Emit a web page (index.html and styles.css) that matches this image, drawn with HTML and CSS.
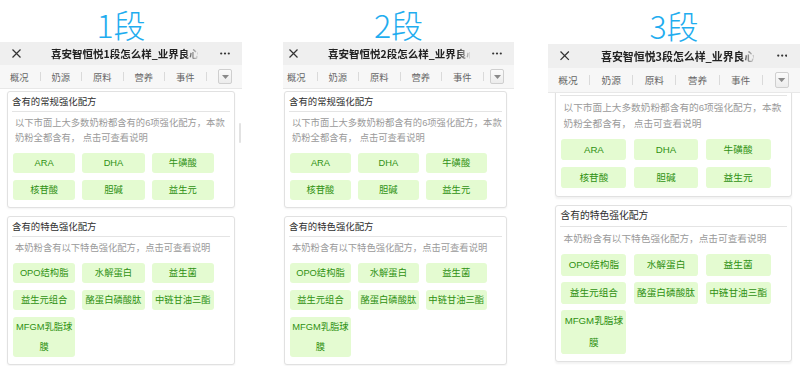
FILE: index.html
```html
<!DOCTYPE html>
<html lang="zh-CN">
<head>
<meta charset="utf-8">
<title>喜安智恒悦 1段 2段 3段</title>
<link rel="stylesheet" href="styles.css">
</head>
<body>
<div class="shots">

  <section class="shot shot--1">
    <h2 class="stage">1段</h2>
    <div class="phone">
      <div class="screen">
        <div class="titlebar">
          <svg class="close" width="9" height="9" viewBox="0 0 9 9"><path d="M0.5 0.5L8.5 8.5M8.5 0.5L0.5 8.5" stroke="#333" stroke-width="1.2" fill="none"/></svg>
          <div class="title"><span>喜安智恒悦1段怎么样_业界良心</span></div>
          <svg class="more" width="10" height="3" viewBox="0 0 10 3"><circle cx="1.2" cy="1.5" r="1.1" fill="#333"/><circle cx="5" cy="1.5" r="1.1" fill="#333"/><circle cx="8.8" cy="1.5" r="1.1" fill="#333"/></svg>
        </div>
        <div class="tabbar">
          <span class="tab">概况</span><i class="sep"></i>
          <span class="tab">奶源</span><i class="sep"></i>
          <span class="tab">原料</span><i class="sep"></i>
          <span class="tab">营养</span><i class="sep"></i>
          <span class="tab">事件</span><i class="sep"></i>
          <span class="drop"><svg width="7" height="4" viewBox="0 0 7 4"><path d="M0 0H7L3.5 4Z" fill="#8a8a8a"/></svg></span>
        </div>
        <div class="viewport">
          <div class="scroll">
            <div class="card">
              <div class="card-title">含有的常规强化配方</div>
              <div class="card-rule"></div>
              <p class="card-desc">以下市面上大多数奶粉都含有的6项强化配方，本款奶粉全都含有， 点击可查看说明</p>
              <div class="tags">
                <span class="tag">ARA</span><span class="tag">DHA</span><span class="tag">牛磺酸</span>
                <span class="tag">核苷酸</span><span class="tag">胆碱</span><span class="tag">益生元</span>
              </div>
            </div>
            <div class="card">
              <div class="card-title">含有的特色强化配方</div>
              <div class="card-rule"></div>
              <p class="card-desc">本奶粉含有以下特色强化配方，点击可查看说明</p>
              <div class="tags">
                <span class="tag">OPO结构脂</span><span class="tag">水解蛋白</span><span class="tag">益生菌</span>
                <span class="tag">益生元组合</span><span class="tag">酪蛋白磷酸肽</span><span class="tag">中链甘油三酯</span>
                <span class="tag">MFGM乳脂球膜</span>
              </div>
            </div>
          </div>
        </div>
      </div>
      <span class="scrollbar"></span>
    </div>
  </section>

  <section class="shot shot--2">
    <h2 class="stage">2段</h2>
    <div class="phone">
      <div class="screen">
        <div class="titlebar">
          <svg class="close" width="9" height="9" viewBox="0 0 9 9"><path d="M0.5 0.5L8.5 8.5M8.5 0.5L0.5 8.5" stroke="#333" stroke-width="1.2" fill="none"/></svg>
          <div class="title"><span>喜安智恒悦2段怎么样_业界良心</span></div>
          <svg class="more" width="10" height="3" viewBox="0 0 10 3"><circle cx="1.2" cy="1.5" r="1.1" fill="#333"/><circle cx="5" cy="1.5" r="1.1" fill="#333"/><circle cx="8.8" cy="1.5" r="1.1" fill="#333"/></svg>
        </div>
        <div class="tabbar">
          <span class="tab">概况</span><i class="sep"></i>
          <span class="tab">奶源</span><i class="sep"></i>
          <span class="tab">原料</span><i class="sep"></i>
          <span class="tab">营养</span><i class="sep"></i>
          <span class="tab">事件</span><i class="sep"></i>
          <span class="drop"><svg width="7" height="4" viewBox="0 0 7 4"><path d="M0 0H7L3.5 4Z" fill="#8a8a8a"/></svg></span>
        </div>
        <div class="viewport">
          <div class="scroll">
            <div class="card">
              <div class="card-title">含有的常规强化配方</div>
              <div class="card-rule"></div>
              <p class="card-desc">以下市面上大多数奶粉都含有的6项强化配方，本款奶粉全都含有， 点击可查看说明</p>
              <div class="tags">
                <span class="tag">ARA</span><span class="tag">DHA</span><span class="tag">牛磺酸</span>
                <span class="tag">核苷酸</span><span class="tag">胆碱</span><span class="tag">益生元</span>
              </div>
            </div>
            <div class="card">
              <div class="card-title">含有的特色强化配方</div>
              <div class="card-rule"></div>
              <p class="card-desc">本奶粉含有以下特色强化配方，点击可查看说明</p>
              <div class="tags">
                <span class="tag">OPO结构脂</span><span class="tag">水解蛋白</span><span class="tag">益生菌</span>
                <span class="tag">益生元组合</span><span class="tag">酪蛋白磷酸肽</span><span class="tag">中链甘油三酯</span>
                <span class="tag">MFGM乳脂球膜</span>
              </div>
            </div>
          </div>
        </div>
      </div>
    </div>
  </section>

  <section class="shot shot--3">
    <h2 class="stage">3段</h2>
    <div class="phone">
      <div class="screen">
        <div class="titlebar">
          <svg class="close" width="9" height="9" viewBox="0 0 9 9"><path d="M0.5 0.5L8.5 8.5M8.5 0.5L0.5 8.5" stroke="#333" stroke-width="1.2" fill="none"/></svg>
          <div class="title"><span>喜安智恒悦3段怎么样_业界良心</span></div>
          <svg class="more" width="10" height="3" viewBox="0 0 10 3"><circle cx="1.2" cy="1.5" r="1.1" fill="#333"/><circle cx="5" cy="1.5" r="1.1" fill="#333"/><circle cx="8.8" cy="1.5" r="1.1" fill="#333"/></svg>
        </div>
        <div class="tabbar">
          <span class="tab">概况</span><i class="sep"></i>
          <span class="tab">奶源</span><i class="sep"></i>
          <span class="tab">原料</span><i class="sep"></i>
          <span class="tab">营养</span><i class="sep"></i>
          <span class="tab">事件</span><i class="sep"></i>
          <span class="drop"><svg width="7" height="4" viewBox="0 0 7 4"><path d="M0 0H7L3.5 4Z" fill="#8a8a8a"/></svg></span>
        </div>
        <div class="viewport">
          <div class="scroll">
            <div class="card">
              <div class="card-title">含有的常规强化配方</div>
              <div class="card-rule"></div>
              <p class="card-desc">以下市面上大多数奶粉都含有的6项强化配方，本款奶粉全都含有， 点击可查看说明</p>
              <div class="tags">
                <span class="tag">ARA</span><span class="tag">DHA</span><span class="tag">牛磺酸</span>
                <span class="tag">核苷酸</span><span class="tag">胆碱</span><span class="tag">益生元</span>
              </div>
            </div>
            <div class="card">
              <div class="card-title">含有的特色强化配方</div>
              <div class="card-rule"></div>
              <p class="card-desc">本奶粉含有以下特色强化配方，点击可查看说明</p>
              <div class="tags">
                <span class="tag">OPO结构脂</span><span class="tag">水解蛋白</span><span class="tag">益生菌</span>
                <span class="tag">益生元组合</span><span class="tag">酪蛋白磷酸肽</span><span class="tag">中链甘油三酯</span>
                <span class="tag">MFGM乳脂球膜</span>
              </div>
            </div>
          </div>
        </div>
      </div>
    </div>
  </section>

</div>
</body>
</html>
```

FILE: styles.css
```css
* { box-sizing: border-box; margin: 0; padding: 0; }

html, body {
  width: 800px;
  height: 366px;
  overflow: hidden;
  background: #fff;
}

body {
  font-family: "Liberation Sans", "Noto Sans CJK SC", sans-serif;
  color: #333;
}

.shots {
  display: flex;
  align-items: flex-start;
}

.shot {
  flex: none;
  display: flex;
  flex-direction: column;
}
.shot--1 { width: 242px; }
.shot--2 { width: 231px; margin-left: 41px; }
.shot--3 { width: 252px; margin-left: 34px; }

.stage {
  height: 42px;
  padding-top: 6px;
  line-height: 36px;
  font-family: "Noto Sans CJK SC", sans-serif;
  font-size: 32px;
  font-weight: 300;
  color: #1fadef;
  text-align: center;
}
.shot--3 .stage { height: 44px; padding-top: 7px; }

.phone {
  position: relative;
  overflow: hidden;
  width: 242px;
  height: 330px;
}
.shot--2 .phone { width: 231px; }
.shot--2 .screen { margin-left: -6px; }
.shot--3 .phone { zoom: 1.04; }

.screen {
  width: 242px;
}
.shot--2 .screen { width: 237px; }

/* top title bar */
.titlebar {
  height: 23px;
  background: #efefef;
  display: flex;
  align-items: center;
  padding: 0 12px;
}
.close { flex: none; display: block; }
.title {
  margin-left: 30px;
  width: 147px;
  overflow: hidden;
  white-space: nowrap;
  font-family: "Noto Sans CJK SC", sans-serif;
  font-size: 10.5px;
  font-weight: 700;
  color: #222;
  -webkit-mask-image: linear-gradient(to right, #000 91%, rgba(0,0,0,0.15));
  mask-image: linear-gradient(to right, #000 91%, rgba(0,0,0,0.15));
}
.shot--2 .title { width: 142px; margin-left: 30px; }
.more { flex: none; display: block; margin-left: auto; }

/* tab bar */
.tabbar {
  height: 24px;
  background: #f7f7f7;
  border-bottom: 1px solid #e8e8e8;
  display: flex;
  align-items: center;
  padding-right: 10px;
}
.tab {
  width: 40.5px;
  flex: none;
  text-align: center;
  font-family: "Noto Sans CJK SC", sans-serif;
  font-size: 9.3px;
  color: #666;
}
.tab:first-child { margin-left: -1px; }
.sep {
  width: 1px;
  height: 9px;
  flex: none;
  background: #dadada;
}
.drop {
  margin-left: auto;
  width: 14px;
  height: 15px;
  border: 1px solid #cfcfcf;
  border-radius: 2px;
  background: linear-gradient(#fbfbfb, #ececec);
  display: flex;
  align-items: center;
  justify-content: center;
}
.drop svg { display: block; }

/* content */
.viewport { overflow: hidden; }
.scroll { padding: 2px 7px 0; }
.shot--3 .scroll { margin-top: -20px; }

.card {
  border: 1px solid #e1e1e1;
  border-radius: 3px;
  background: #fff;
  box-shadow: 0 1px 2px rgba(0, 0, 0, 0.05);
  margin-bottom: 8px;
}
.card-title {
  height: 19px;
  line-height: 19px;
  padding-left: 4px;
  font-size: 9.4px;
  color: #2e2e2e;
}
.card-rule {
  height: 1px;
  margin: 0 4px;
  background: #e4e4e4;
}
.card-desc {
  padding: 4px 3px 0 7px;
  font-size: 9.3px;
  line-height: 15px;
  color: #9a9a9a;
}
.tags {
  display: grid;
  grid-template-columns: repeat(3, 28.2%);
  gap: 7px;
  padding: 7px 0 7px 5px;
}
.shot--3 .tags { row-gap: 6px; }
.tag {
  background: #e4fbd1;
  color: #2f9112;
  border-radius: 3px;
  text-align: center;
  font-size: 9.3px;
  line-height: 20px;
  padding: 0 2px;
}
.shot--3 .tag { line-height: 21px; }

.scrollbar {
  position: absolute;
  right: 1px;
  top: 81px;
  width: 2px;
  height: 20px;
  background: #e2e2e2;
  border-radius: 1px;
}
```
